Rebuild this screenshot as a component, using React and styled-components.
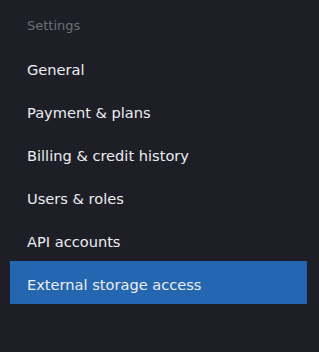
import React from 'react'
import styled, { createGlobalStyle } from 'styled-components'

const items = [
    'General',
    'Payment & plans',
    'Billing & credit history',
    'Users & roles',
    'API accounts',
    'External storage access',
];

function App() {
    const active = 'External storage access';
    return (
        <>
            <GlobalStyle />
            <Sidebar>
                <Heading>Settings</Heading>
                <Menu>
                    {items.map(item => (
                        <Item key={item} $active={item === active}>{item}</Item>
                    ))}
                </Menu>
            </Sidebar>
        </>
    )
}

const GlobalStyle = createGlobalStyle`
    html, body {
        margin: 0;
        background: #1e1f26;
    }
`;

const Sidebar = styled.nav`
    width: 319px;
    height: 352px;
    padding: 0 12px 0 10px;
    box-sizing: border-box;
    font-family: "DejaVu Sans", sans-serif;
`;

const Heading = styled.div`
    height: 46px;
    display: flex;
    align-items: center;
    padding: 4px 0 0 17px;
    box-sizing: border-box;
    color: #6c6f79;
    font-size: 13px;
`;

const Menu = styled.ul`
    list-style: none;
    margin: 0;
    padding: 0;
`;

const Item = styled.li`
    height: 43px;
    display: flex;
    align-items: center;
    padding: 4px 0 0 17px;
    box-sizing: border-box;
    color: #eceef2;
    font-size: 14.6px;
    background: ${p => p.$active ? '#2566b0' : 'transparent'};
`;

export default App
